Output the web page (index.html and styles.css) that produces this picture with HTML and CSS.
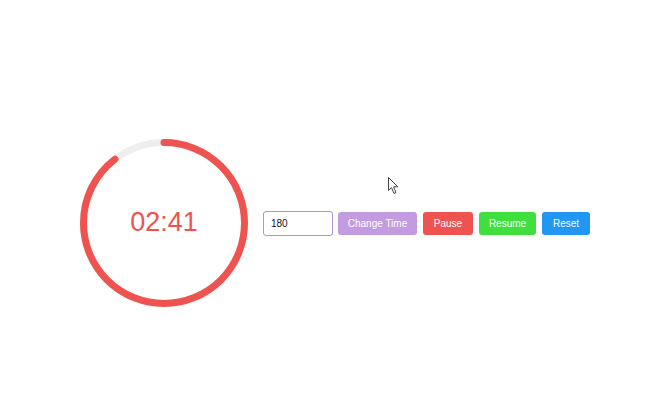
FILE: index.html
```html
<!DOCTYPE html>
<html>
<head>
<meta charset="utf-8">
<link rel="stylesheet" href="styles.css">
</head>
<body>
<main class="timer">
  <div class="dial">
    <svg class="ring" width="168" height="168" viewBox="0 0 168 168">
      <circle class="track" cx="84" cy="84" r="80.5"></circle>
      <circle class="progress" cx="84" cy="84" r="80.5" transform="rotate(-90 84 84)" style="stroke-dasharray: 452.3 505.8"></circle>
    </svg>
    <div class="time">02:41</div>
  </div>
  <div class="controls">
    <input class="seconds" type="text" value="180">
    <button class="btn change">Change Time</button>
    <button class="btn pause">Pause</button>
    <button class="btn resume">Resume</button>
    <button class="btn reset">Reset</button>
  </div>
</main>
<svg class="cursor" width="12" height="18" viewBox="0 0 12 18">
  <path d="M0.5 0.5 L0.5 13.5 L3.5 10.5 L6 16.5 L8 15.6 L5.6 9.8 L9.8 9.8 Z" fill="#fff" stroke="#444" stroke-width="1"/>
</svg>
</body>
</html>
```
FILE: styles.css
```css
html, body {
  margin: 0;
  padding: 0;
  background: #ffffff;
  font-family: "Liberation Sans", Arial, sans-serif;
}
body {
  width: 664px;
  height: 406px;
  position: relative;
  overflow: hidden;
}
.timer {
  display: flex;
  align-items: center;
  gap: 15px;
  padding: 139px 0 0 80px;
}
.dial {
  position: relative;
  width: 168px;
  height: 168px;
}
.ring {
  display: block;
}
.track {
  fill: none;
  stroke: #eeeeee;
  stroke-width: 7;
}
.progress {
  fill: none;
  stroke: #ef5350;
  stroke-width: 7;
  stroke-linecap: round;
}
.time {
  position: absolute;
  inset: 0;
  display: flex;
  align-items: center;
  justify-content: center;
  color: #ef5350;
  font-size: 27px;
  padding-bottom: 1px;
}
.controls {
  display: flex;
  align-items: center;
  gap: 6px;
  padding-top: 1px;
}
.seconds {
  box-sizing: border-box;
  width: 70px;
  height: 25px;
  border: 1px solid #b58fd6;
  border-radius: 3px;
  padding: 0 7px;
  margin-right: -1px;
  font-family: "Liberation Sans", Arial, sans-serif;
  font-size: 10px;
  color: #111;
  outline: none;
}
.btn {
  box-sizing: border-box;
  height: 23px;
  border: none;
  border-radius: 3px;
  color: #ffffff;
  font-family: "Liberation Sans", Arial, sans-serif;
  font-size: 10px;
  padding: 0;
}
.change {
  width: 79px;
  background: #c39be0;
}
.pause {
  width: 50px;
  background: #ef5350;
}
.resume {
  width: 57px;
  background: #3fe03d;
}
.reset {
  width: 48px;
  background: #2196f3;
}
.cursor {
  position: absolute;
  left: 388px;
  top: 177px;
}
```
